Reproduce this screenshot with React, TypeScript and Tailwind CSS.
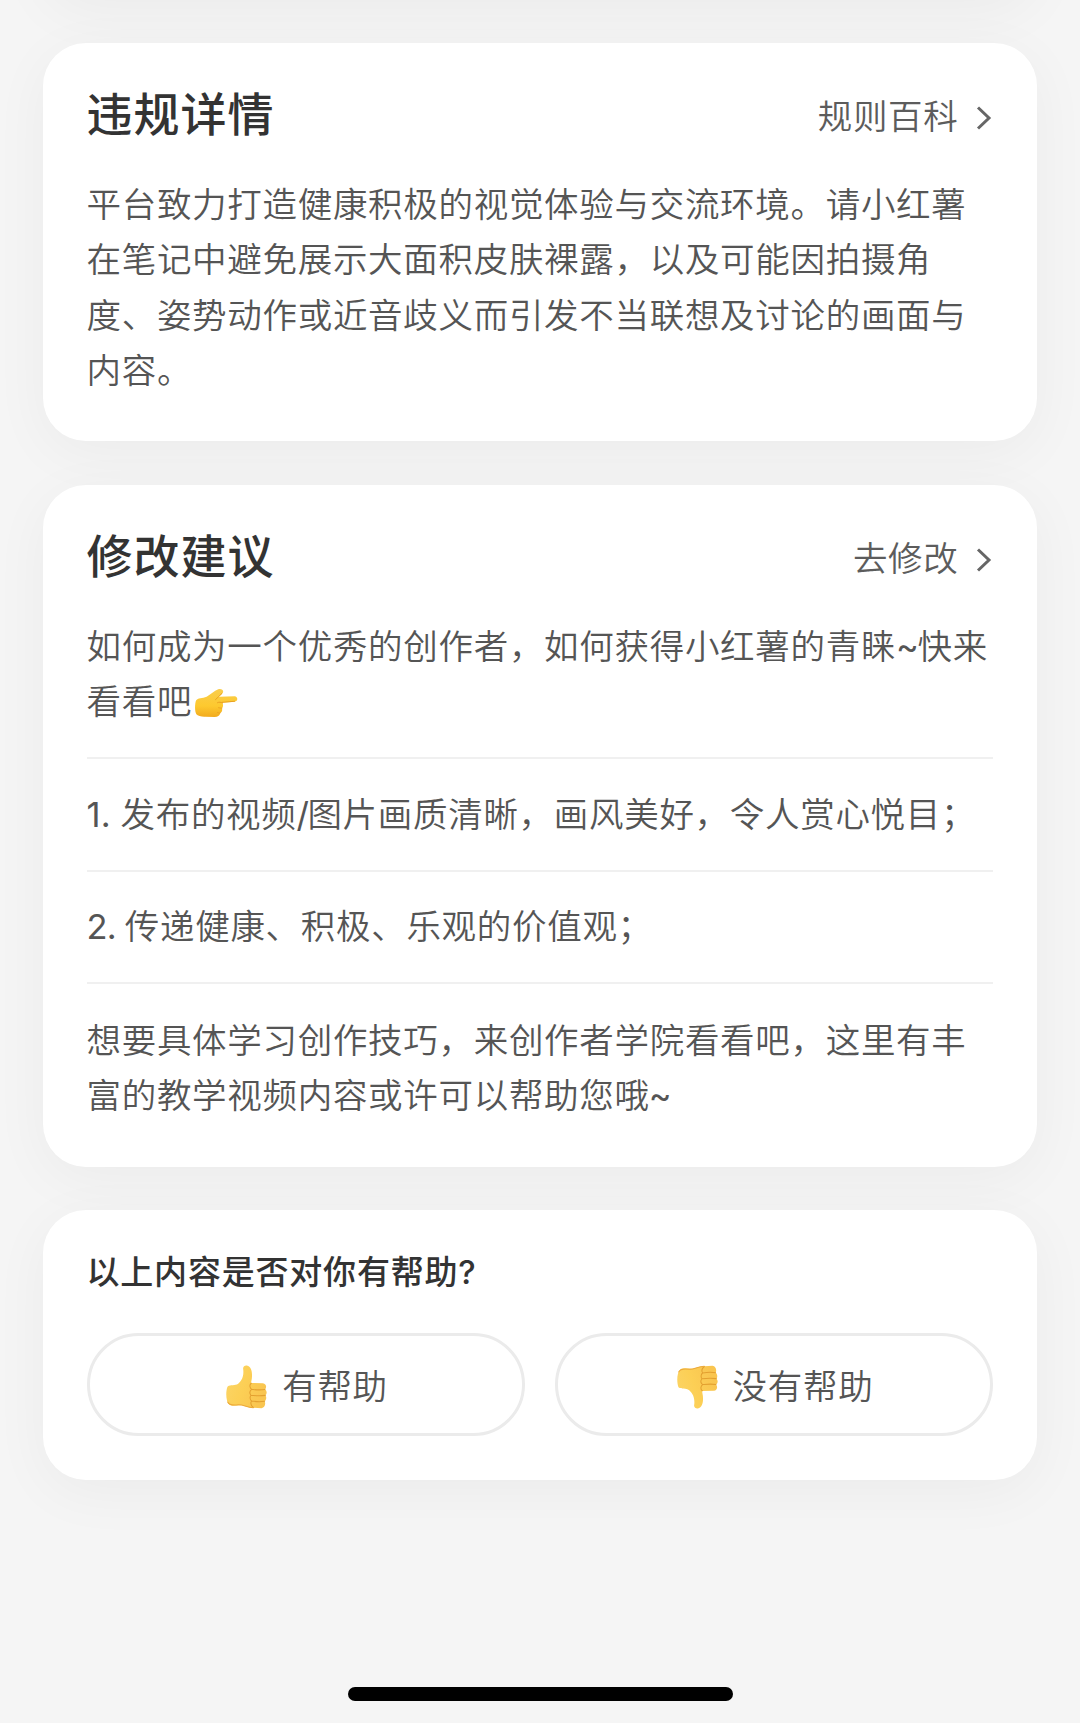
import React from 'react';

const Card: React.FC<{ children?: React.ReactNode; className?: string }> = ({ children, className = '' }) => (
  <section className={`mx-[43px] rounded-[43px] bg-white pl-[43.5px] pr-[44.5px] shadow-[0_12px_58px_rgba(0,0,0,0.045)] ${className}`}>
    {children}
  </section>
);

const CardHeader: React.FC<{ title: string; action: string }> = ({ title, action }) => (
  <div className="flex h-[57px] items-center justify-between">
    <h2 className="text-[46px] font-medium leading-[57px] tracking-[1px] text-[#333333]">{title}</h2>
    <button className="flex items-center pt-1 text-[34.5px] font-[350] leading-[53px] tracking-[0.7px] text-[#5c5c5c]">
      {action}
      <svg className="ml-[17px] mr-[1px] mt-[3px]" width="16" height="26" viewBox="0 0 16 26" fill="none">
        <path d="M2 2.5L13 13L2 23.5" stroke="#666666" strokeWidth="3" />
      </svg>
    </button>
  </div>
);

const Lines: React.FC<{ lines: React.ReactNode[] }> = ({ lines }) => (
  <p className="whitespace-nowrap text-[34.5px] font-[350] leading-[55.4px] tracking-[0.7px] text-[#555555]">
    {lines.map((line, i) => (
      <span key={i} className="block">{line}</span>
    ))}
  </p>
);

const PointRight: React.FC = () => (
  <svg className="relative -top-px ml-[3px] inline-block align-middle" width="43" height="30" viewBox="0 0 126 86" fill="none">
    <defs>
      <linearGradient id="point" x1="0" y1="0" x2="0" y2="1">
        <stop offset="0" stopColor="#f9cd4c" />
        <stop offset="0.6" stopColor="#fdc92f" />
        <stop offset="1" stopColor="#f2ab1e" />
      </linearGradient>
    </defs>
    <path
      d="M3 36C8 28 22 30 34 25C46 18 56 8 68 3C78 0 86 7 81 14C78 19 72 22 70 25L116 23C126 24 127 38 116 39L80 42C84 50 82 56 79 58C81 66 78 70 74 72C73 80 66 84 58 84L30 83C20 84 8 80 4 76C-2 66 0 44 3 36Z"
      fill="url(#point)"
    />
    <path d="M79 15C74 22 65 26 60 33M116 38L80 41M81 43C76 40 70 40 66 42" stroke="#e59a1c" strokeWidth="2.5" strokeLinecap="round" />
    <path d="M79 58C76 58 72 58 69 57M74 72C71 73 68 72 66 71" stroke="#e59a1c" strokeWidth="2" strokeLinecap="round" />
  </svg>
);

const Thumb: React.FC<{ down?: boolean }> = ({ down }) => (
  <svg className={down ? '-scale-y-100' : ''} width="41" height="44" viewBox="0 0 120 128" fill="none">
    <defs>
      <linearGradient id="thumb" x1="0" y1="0" x2="1" y2="0.4">
        <stop offset="0" stopColor="#fbd568" />
        <stop offset="0.55" stopColor="#fccf55" />
        <stop offset="1" stopColor="#f9c550" />
      </linearGradient>
    </defs>
    <path
      d="M50 10C50 2 58 0 63 2C74 6 77 20 76 34C76 42 73 48 74 52L108 53C118 54 120 66 114 71C121 75 120 85 115 88C120 93 118 103 113 106C117 112 114 125 104 126L80 125C68 125 58 121 50 118C38 116 20 122 10 116C-1 106 -1 78 4 64C8 58 22 60 32 57C44 50 54 34 50 10Z"
      fill="url(#thumb)"
    />
    <path
      d="M114 71C100 74 86 72 75 71M115 88.5C100 91 86 90 73 88M113 106C100 108 86 107 75 105M74 53C68 57 69 66 75 71C69 76 69 83 73 88C69 93 70 101 75 105C71 111 74 119 80 124"
      stroke="#e3a030"
      strokeWidth="3"
      strokeLinecap="round"
    />
    <path d="M5 108C9 117 22 118 36 116C50 115 60 124 80 125" stroke="#eca93a" strokeWidth="3" strokeLinecap="round" />
  </svg>
);

const FeedbackButton: React.FC<{ label: string; down?: boolean }> = ({ label, down }) => (
  <button className="flex h-[103px] items-center justify-center gap-[15px] rounded-full border-[3px] border-[#ebebeb] pl-[3px] pt-[5px] text-[34.5px] font-[350] tracking-[0.7px] text-[#555555]">
    <Thumb down={down} />
    <span>{label}</span>
  </button>
);

const App: React.FC = () => {
  return (
    <div className="flex h-[1723px] w-[1080px] flex-col overflow-hidden bg-[#f5f5f5] font-['Inter','Noto_Sans_CJK_SC',sans-serif]">
      {/* Tail of the card scrolled off the top */}
      <Card className="-mt-[200px] h-[200px] shrink-0" />

      <Card className="mt-[42.5px] h-[398.5px] shrink-0 pt-[43px]">
        <CardHeader title="违规详情" action="规则百科" />
        <div className="mt-[34.5px]">
          <Lines
            lines={[
              '平台致力打造健康积极的视觉体验与交流环境。请小红薯',
              '在笔记中避免展示大面积皮肤裸露，以及可能因拍摄角',
              '度、姿势动作或近音歧义而引发不当联想及讨论的画面与',
              '内容。',
            ]}
          />
        </div>
      </Card>

      <Card className="mt-[43.5px] h-[682px] shrink-0 pt-[43px]">
        <CardHeader title="修改建议" action="去修改" />
        <div className="mt-[34px] divide-y-2 divide-[#f0f0f0]">
          <div className="pb-[28px]">
            <Lines
              lines={[
                <>如何成为一个优秀的创作者，如何获得小红薯的青睐<span className="font-normal tracking-[-1.5px]">~</span>快来</>,
                <>看看吧<PointRight /></>,
              ]}
            />
          </div>
          <div className="py-[27.5px]">
            <Lines
              lines={[
                <><span className="font-normal tracking-[0.1px]">1. </span>发布的视频<span className="font-normal tracking-[-1.5px]">/</span>图片画质清晰，画风美好，令人赏心悦目；</>,
              ]}
            />
          </div>
          <div className="py-[27.5px]">
            <Lines lines={[<><span className="font-normal tracking-[-0.8px]">2. </span>传递健康、积极、乐观的价值观；</>]} />
          </div>
          <div className="pt-[28.5px]">
            <Lines
              lines={[
                '想要具体学习创作技巧，来创作者学院看看吧，这里有丰',
                <>富的教学视频内容或许可以帮助您哦<span className="-ml-px font-normal">~</span></>,
              ]}
            />
          </div>
        </div>
      </Card>

      <Card className="mt-[43.5px] h-[269.5px] shrink-0 pt-[40px]">
        <h3 className="text-[33px] font-medium leading-[44px] tracking-[0.8px] text-[#333333]">以上内容是否对你有帮助?</h3>
        <div className="mt-[39px] grid grid-cols-2 gap-[30px]">
          <FeedbackButton label="有帮助" />
          <FeedbackButton label="没有帮助" down />
        </div>
      </Card>

      {/* Home indicator */}
      <div className="mx-auto mb-[22px] mt-auto h-[14px] w-[385px] shrink-0 rounded-full bg-black" />
    </div>
  );
};

export default App;
